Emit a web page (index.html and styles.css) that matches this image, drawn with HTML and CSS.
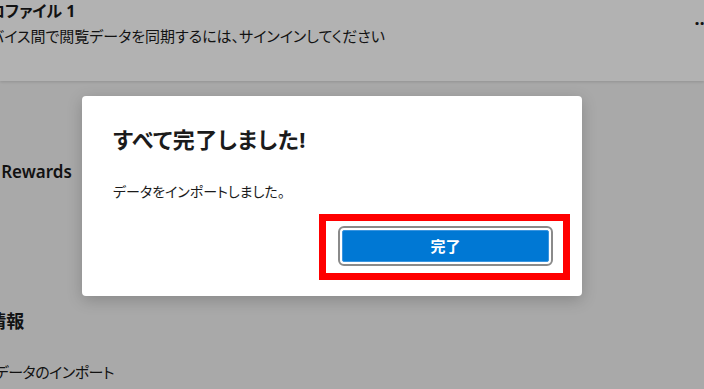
FILE: index.html
```html
<!DOCTYPE html>
<html lang="ja">
<head>
<meta charset="utf-8">
<title>プロファイル - データのインポート</title>
<link rel="stylesheet" href="styles.css">
</head>
<body>
<div class="page">
    <div class="profile-head">
        <div class="profile-info">
            <div class="profile-name">プロファイル 1</div>
            <div class="profile-sync">デバイス間で閲覧データを同期するには、サインインしてください</div>
        </div>
        <div class="profile-more">…</div>
    </div>
    <ul class="side-list">
        <li class="item-rewards">Microsoft Rewards</li>
        <li class="item-info">お支払い情報</li>
        <li class="item-import">ブラウザー データのインポート</li>
    </ul>
</div>
<!-- モーダル -->
<div class="overlay">
    <div class="dialog">
        <h2 class="dialog-title">すべて完了しました!</h2>
        <p class="dialog-text">データをインポートしました。</p>
        <div class="dialog-foot">
            <div class="mark">
                <button class="btn-done">完了</button>
            </div>
        </div>
    </div>
</div>
</body>
</html>
```

FILE: styles.css
```css
html, body {
    margin: 0;
    padding: 0;
}
body {
    width: 704px;
    height: 389px;
    overflow: hidden;
    position: relative;
    background: #f3f3f3;
    color: #1b1b1b;
    font-family: "Noto Sans", "Noto Sans CJK JP", sans-serif;
    font-feature-settings: "palt";
}
ul, li, h2, p {
    margin: 0;
    padding: 0;
}
ul {
    list-style: none;
}
.page {
    height: 389px;
}
.profile-head {
    height: 81px;
    background: #ffffff;
    box-shadow: 0 1px 3px rgba(0, 0, 0, 0.15);
    display: flex;
    justify-content: space-between;
    align-items: flex-start;
    overflow: hidden;
}
.profile-info {
    margin-left: -26px;
}
.profile-name {
    font-size: 16px;
    font-weight: bold;
    line-height: 22px;
}
.profile-sync {
    font-size: 15px;
    line-height: 20px;
    margin-top: 4px;
    margin-left: 2px;
    white-space: nowrap;
}
.profile-more {
    font-size: 18px;
    font-weight: bold;
    line-height: 20px;
    margin-top: 8px;
    margin-right: -6px;
}
.side-list {
    margin-left: -91px;
    padding-top: 78px;
}
.side-list li {
    white-space: nowrap;
}
.item-rewards {
    font-size: 17px;
    font-weight: 600;
    line-height: 26px;
    margin-left: 9px;
}
.item-info {
    font-size: 18px;
    font-weight: 600;
    line-height: 26px;
    margin-top: 123px;
    margin-left: 8px;
}
.item-import {
    font-size: 15px;
    letter-spacing: -0.5px;
    line-height: 22px;
    margin-top: 27px;
    margin-left: 16px;
}
.overlay {
    position: absolute;
    left: 0;
    top: 0;
    width: 704px;
    height: 389px;
    background: rgba(0, 0, 0, 0.3);
    padding: 96px 0 0 82px;
    box-sizing: border-box;
}
.dialog {
    width: 500px;
    height: 200px;
    box-sizing: border-box;
    padding: 29px 32px 16px 31px;
    background: #ffffff;
    border-radius: 4px;
    box-shadow: 0 4px 16px rgba(0, 0, 0, 0.2);
}
.dialog-title {
    font-size: 22px;
    font-weight: bold;
    letter-spacing: 0.5px;
    line-height: 28px;
    color: #1b1b1b;
}
.dialog-text {
    font-size: 14px;
    line-height: 20px;
    margin-top: 29px;
    color: #1b1b1b;
}
.dialog-foot {
    display: flex;
    justify-content: flex-end;
    margin-top: 12px;
    margin-right: -20px;
}
/* 赤枠の注記 */
.mark {
    border: 7px solid #ff0000;
    padding: 5px 10px 7px 12px;
}
.btn-done {
    display: block;
    width: 207px;
    height: 32px;
    margin: 4px;
    padding: 0;
    background: #0078d4;
    border: 1px solid #3a95e0;
    border-radius: 2px;
    outline: 2px solid #8a8a8a;
    outline-offset: 2px;
    color: #ffffff;
    font-family: inherit;
    font-size: 15px;
    font-weight: bold;
    line-height: 30px;
}
```
